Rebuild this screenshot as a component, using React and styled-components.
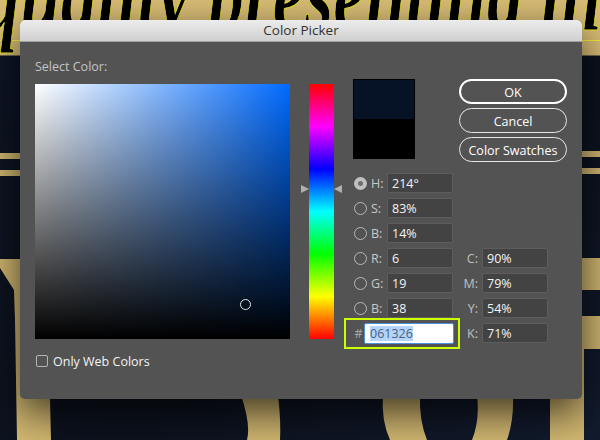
import React from 'react'
import styled, { createGlobalStyle } from 'styled-components'

const GlobalStyle = createGlobalStyle`
  html, body {
    margin: 0;
    padding: 0;
    background: #0e1522;
  }
  * { box-sizing: border-box; }
`

const hsbRows = [
  { key: 'H', value: '214°', selected: true },
  { key: 'S', value: '83%' },
  { key: 'B', value: '14%' },
  { key: 'R', value: '6' },
  { key: 'G', value: '19' },
  { key: 'B', value: '38' },
]

const cmykRows = [
  { key: 'C', value: '90%' },
  { key: 'M', value: '79%' },
  { key: 'Y', value: '54%' },
  { key: 'K', value: '71%' },
]

const Backdrop = () => <BackdropSvg viewBox="0 0 600 440">
  <defs>
    <linearGradient id="navy" x1="0" y1="0" x2="1" y2="1">
      <stop offset="0" stopColor="#0e1626" />
      <stop offset="0.6" stopColor="#0c121d" />
      <stop offset="1" stopColor="#121b2e" />
    </linearGradient>
  </defs>
  <rect width="600" height="440" fill="url(#navy)" />
  <rect width="600" height="55.5" fill="#d9bd76" />
  <rect y="40" width="600" height="1" fill="#f4f23a" />
  <text x="-16" y="30" fontFamily="'Liberation Serif', serif" fontSize="108" fontWeight="700" fontStyle="italic" fill="#000" stroke="#e8e82a" strokeWidth="1" textLength="650" lengthAdjust="spacingAndGlyphs">quality presenting the</text>
  <g fill="#d2b871">
    <rect y="153" width="24" height="6" />
    <rect y="170" width="24" height="6" />
    <rect x="576" y="151" width="24" height="6" />
    <rect x="576" y="168" width="24" height="6" />
    <rect x="576" y="258" width="24" height="32" />
    <rect x="576" y="316" width="24" height="33" />
    <path d="M0 259 H24 V399 H50 L51 440 H17 L15 320 L14 290 L0 268 Z" />
    <path d="M241 395 H278 Q281 420 280 440 H247 Q251 425 241 395 Z" />
    <path d="M383 395 H420 Q419 420 427 440 H390 Q381 420 383 395 Z" />
    <path d="M477 395 H513 Q514 420 507 440 H472 Q480 420 477 395 Z" />
    <rect x="550" y="395" width="34" height="45" />
    <rect x="576" y="340" width="8" height="100" />
  </g>
</BackdropSvg>

export default () => {
  return <Stage>
    <GlobalStyle />
    <Backdrop />
    <Dialog>
      <TitleBar>Color Picker</TitleBar>
      <Body>
        <LeftColumn>
          <SelectLabel>Select Color:</SelectLabel>
          <ColorField>
            <PickerRing />
          </ColorField>
          <WebColors>
            <CheckBox />
            Only Web Colors
          </WebColors>
        </LeftColumn>

        <HueBar>
          <HueArrow side="left" />
          <HueArrow side="right" />
        </HueBar>

        <RightColumn>
          <TopRow>
            <Swatch>
              <SwatchPart color="#061326" />
              <SwatchPart color="#000000" />
            </Swatch>
            <Buttons>
              <Button primary>OK</Button>
              <Button>Cancel</Button>
              <Button>Color Swatches</Button>
            </Buttons>
          </TopRow>

          <Fields>
            <FieldColumn>
              {hsbRows.map((row, i) => <FieldRow key={i}>
                <Radio selected={row.selected} />
                <FieldLabel>{row.key}:</FieldLabel>
                <ValueBox>{row.value}</ValueBox>
              </FieldRow>)}
              <FieldRow>
                <Hash>#</Hash>
                <HexBox><Selection>061326</Selection></HexBox>
                <Highlight />
              </FieldRow>
            </FieldColumn>
            <CmykColumn>
              {cmykRows.map((row) => <CmykRow key={row.key}>
                <CmykLabel>{row.key}:</CmykLabel>
                <ValueBox>{row.value}</ValueBox>
              </CmykRow>)}
            </CmykColumn>
          </Fields>
        </RightColumn>
      </Body>
    </Dialog>
  </Stage>
}

const Stage = styled.div`
  position: relative;
  width: 600px;
  height: 440px;
  padding: 20px 18px 0 20px;
  overflow: hidden;
  font-family: "Open Sans", "Liberation Sans", sans-serif;
  font-size: 12.5px;
`

const BackdropSvg = styled.svg`
  position: absolute;
  left: 0;
  top: 0;
  width: 600px;
  height: 440px;
`

const Dialog = styled.div`
  position: relative;
  width: 562px;
  height: 379px;
  background: #535353;
  border-radius: 5px;
  box-shadow: 0 14px 40px rgba(0, 0, 0, 0.7);
`

const TitleBar = styled.div`
  height: 22px;
  padding-top: 1px;
  background: linear-gradient(#ececec, #d0d0d0);
  border-bottom: 1px solid #a2a2a2;
  border-radius: 5px 5px 0 0;
  color: #333;
  font-size: 13.5px;
  line-height: 19px;
  text-align: center;
`

const Body = styled.div`
  display: flex;
  padding: 0 15px;
`

const LeftColumn = styled.div`
  width: 255px;
  margin-right: 19px;
`

const SelectLabel = styled.div`
  height: 42px;
  padding-top: 17px;
  color: #c4c4c4;
  line-height: 16px;
`

const ColorField = styled.div`
  position: relative;
  width: 255px;
  height: 255px;
  background:
    linear-gradient(to top, #000, rgba(0, 0, 0, 0)),
    linear-gradient(to right, #fff, #006aff);
`

const PickerRing = styled.div`
  position: absolute;
  left: 205px;
  top: 215px;
  width: 11px;
  height: 11px;
  border: 1.5px solid #e4e4e4;
  border-radius: 50%;
`

const WebColors = styled.div`
  display: flex;
  align-items: center;
  gap: 5px;
  height: 12px;
  margin: 16px 0 0 1px;
  color: #f4f4f4;
`

const CheckBox = styled.div`
  width: 12px;
  height: 12px;
  border: 1px solid #b4b4b4;
  border-radius: 2px;
`

const HueBar = styled.div`
  position: relative;
  flex: none;
  width: 25px;
  height: 255px;
  margin: 42px 19px 0 0;
  background: linear-gradient(#f00, #f0f 16.67%, #00f 33.33%, #0ff 50%, #0f0 66.67%, #ff0 83.33%, #f00);
`

const HueArrow = styled.div`
  position: absolute;
  top: 101px;
  ${ ({side}) => side === 'left' ? 'left: -8px;' : 'right: -8px;' }
  border-style: solid;
  border-width: 4px 0 4px 8px;
  border-color: transparent transparent transparent #b0b0b0;
  ${ ({side}) => side === 'right' && 'transform: scaleX(-1);' }
`

const RightColumn = styled.div`
  width: 214px;
  margin-top: 37px;
`

const TopRow = styled.div`
  display: flex;
  justify-content: space-between;
  height: 83px;
  margin-bottom: 11px;
`

const Swatch = styled.div`
  display: flex;
  flex-direction: column;
  width: 62px;
  height: 80px;
  border: 1px solid #000;
`

const SwatchPart = styled.div`
  flex: 1;
  background: ${ ({color}) => color };
`

const Buttons = styled.div`
  display: flex;
  flex-direction: column;
  gap: 4px;
  width: 108px;
`

const Button = styled.div`
  height: 25px;
  border: ${ ({primary}) => primary ? '2px solid #fff' : '1px solid #e6e6e6' };
  border-radius: 13px;
  color: #fff;
  line-height: ${ ({primary}) => primary ? '23px' : '25px' };
  text-align: center;
  white-space: nowrap;
`

const Fields = styled.div`
  display: flex;
`

const FieldColumn = styled.div`
  display: flex;
  flex-direction: column;
  gap: 5px;
  width: 100px;
`

const FieldRow = styled.div`
  position: relative;
  display: flex;
  align-items: center;
  height: 20px;
`

const Radio = styled.div`
  flex: none;
  width: 13px;
  height: 13px;
  margin-left: 1px;
  border-radius: 50%;
  border: ${ ({selected}) => selected ? '4px solid #c0c0c0' : '1px solid #b8b8b8' };
  background: ${ ({selected}) => selected ? '#6e6e6e' : 'transparent' };
`

const FieldLabel = styled.div`
  flex: 1;
  padding-left: 4px;
  color: #c8c8c8;
`

const ValueBox = styled.div`
  flex: none;
  width: 66px;
  height: 20px;
  padding-left: 4px;
  background: #434343;
  border: 1px solid #5d5d5d;
  border-radius: 2px;
  color: #f4f4f4;
  line-height: 20px;
`

const Hash = styled.div`
  flex: 1;
  color: #a8a8a8;
  text-align: center;
`

const HexBox = styled.div`
  flex: none;
  width: 90px;
  height: 21px;
  margin-right: -1px;
  padding-left: 5px;
  background: #fff;
  border: 1px solid #4a90e2;
  border-radius: 2px;
  line-height: 19px;
`

const Selection = styled.span`
  display: inline-block;
  height: 15px;
  margin-top: 2px;
  background: #b3d5fb;
  color: #4c6078;
  line-height: 15px;
`

const Highlight = styled.div`
  position: absolute;
  left: -9px;
  top: -5px;
  width: 116px;
  height: 31px;
  border: 2px solid #ccff00;
  pointer-events: none;
`

const CmykColumn = styled.div`
  display: flex;
  flex-direction: column;
  gap: 5px;
  width: 95px;
  padding-top: 75px;
`

const CmykRow = styled.div`
  display: flex;
  justify-content: flex-end;
  align-items: center;
  gap: 4px;
  height: 20px;
`

const CmykLabel = styled.div`
  color: #c0c0c0;
`
